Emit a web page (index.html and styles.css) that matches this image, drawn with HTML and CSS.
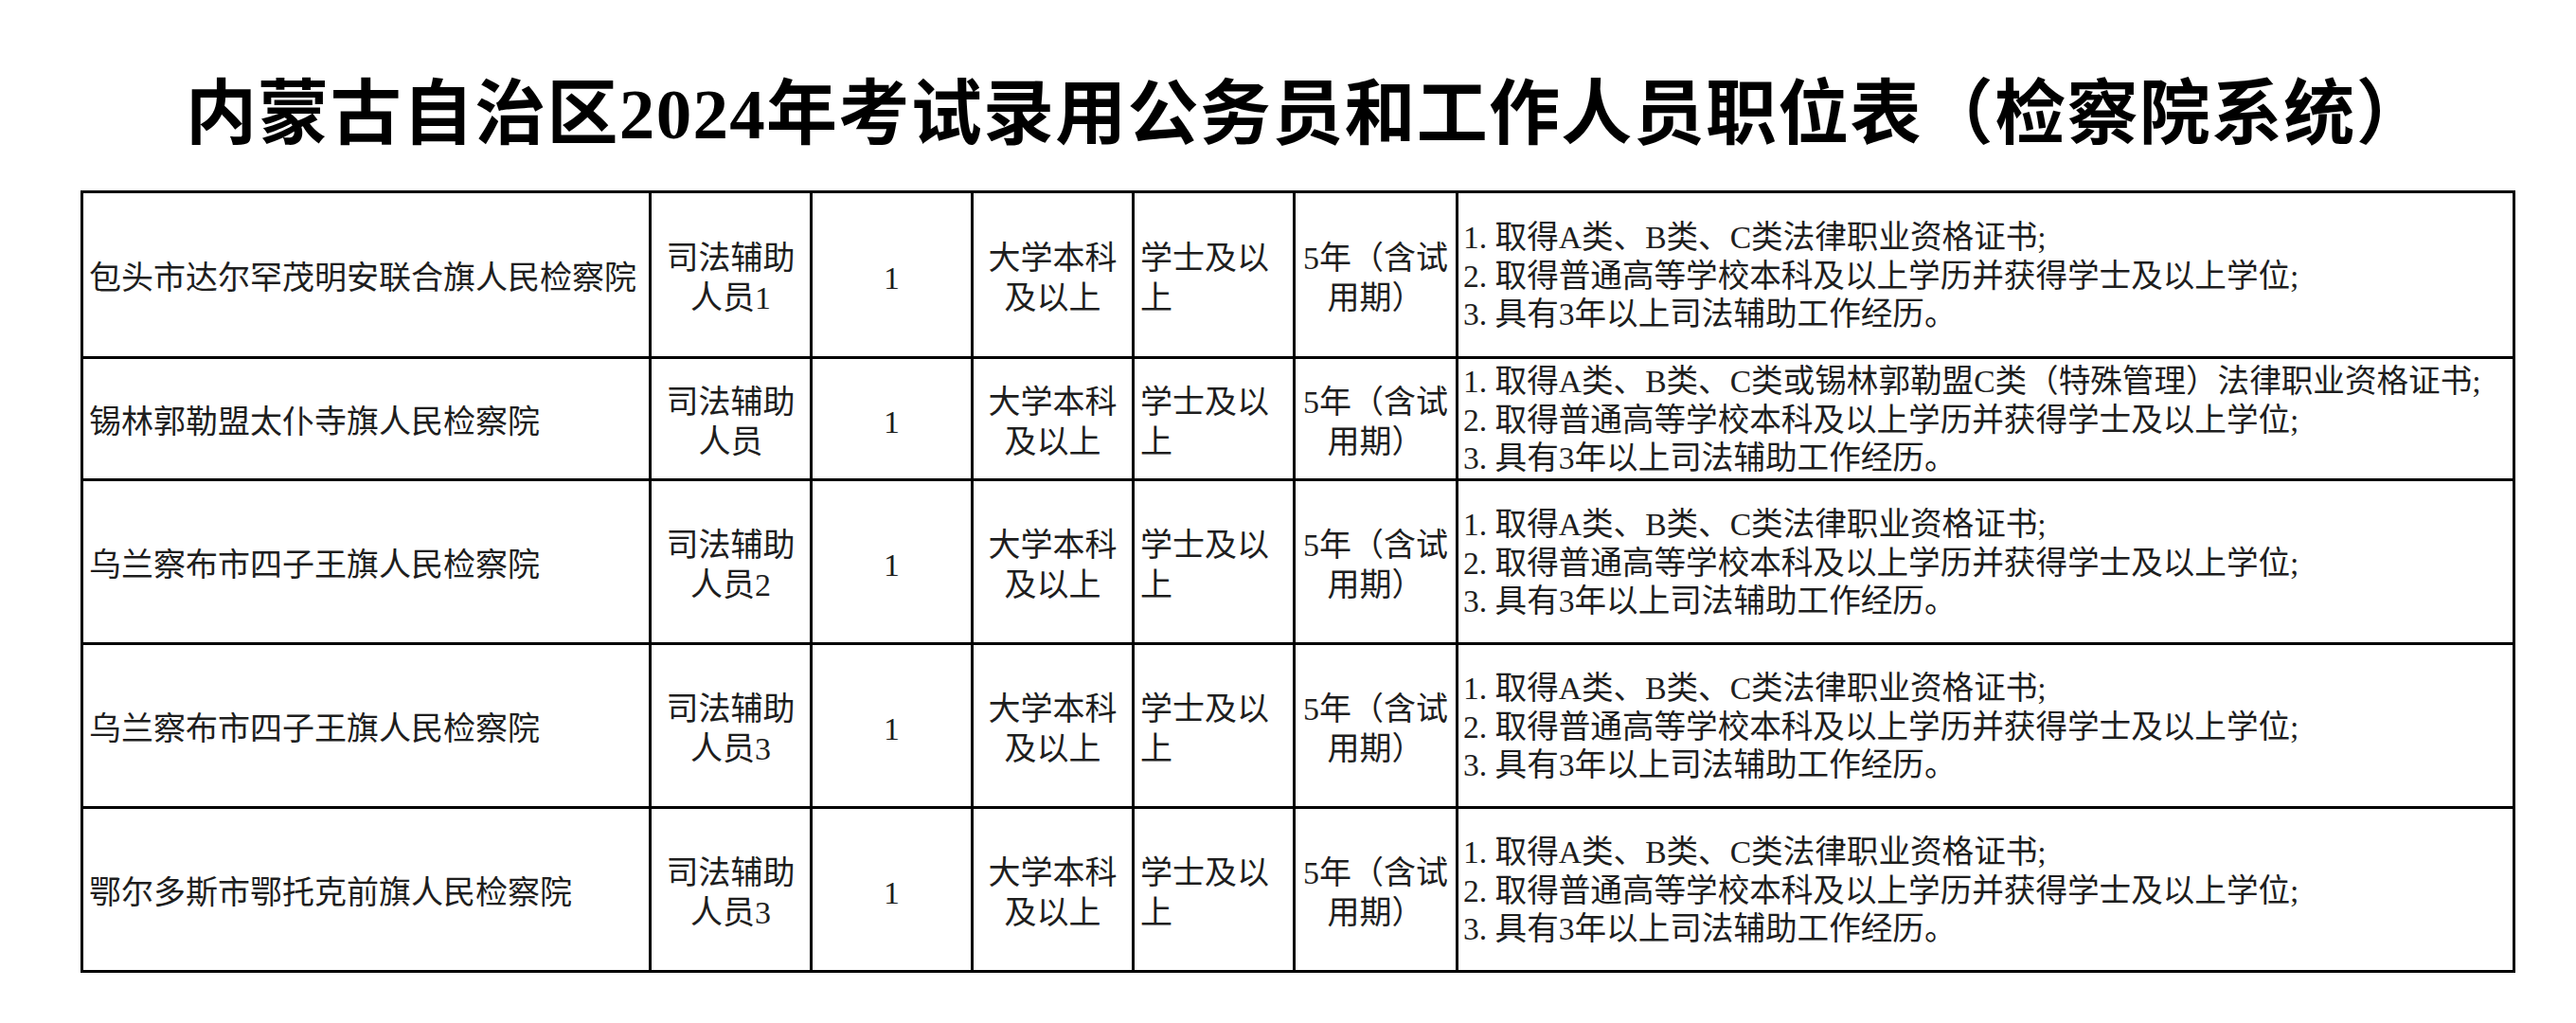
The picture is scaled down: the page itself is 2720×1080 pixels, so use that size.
FILE: index.html
```html
<!DOCTYPE html>
<html lang="zh-CN">
<head>
<meta charset="utf-8">
<title>内蒙古自治区2024年考试录用公务员和工作人员职位表（检察院系统）</title>
<link rel="stylesheet" href="styles.css">
</head>
<body>
<div class="page">
  <h1 class="title">内蒙古自治区2024年考试录用公务员和工作人员职位表（检察院系统）</h1>
  <table class="jobs">
    <colgroup>
      <col class="c-org"><col class="c-pos"><col class="c-num"><col class="c-edu"><col class="c-deg"><col class="c-term"><col class="c-req">
    </colgroup>
    <tbody>
      <tr class="r-first">
        <td class="org">包头市达尔罕茂明安联合旗人民检察院</td>
        <td class="ctr">司法辅助<br>人员1</td>
        <td class="ctr">1</td>
        <td class="ctr">大学本科<br>及以上</td>
        <td class="deg">学士及以<br>上</td>
        <td class="ctr">5年（含试<br>用期）</td>
        <td class="req">1.&nbsp;取得A类、B类、C类法律职业资格证书;<br>2.&nbsp;取得普通高等学校本科及以上学历并获得学士及以上学位;<br>3.&nbsp;具有3年以上司法辅助工作经历。</td>
      </tr>
      <tr class="r-short">
        <td class="org">锡林郭勒盟太仆寺旗人民检察院</td>
        <td class="ctr">司法辅助<br>人员</td>
        <td class="ctr">1</td>
        <td class="ctr">大学本科<br>及以上</td>
        <td class="deg">学士及以<br>上</td>
        <td class="ctr">5年（含试<br>用期）</td>
        <td class="req">1.&nbsp;取得A类、B类、C类或锡林郭勒盟C类（特殊管理）法律职业资格证书;<br>2.&nbsp;取得普通高等学校本科及以上学历并获得学士及以上学位;<br>3.&nbsp;具有3年以上司法辅助工作经历。</td>
      </tr>
      <tr class="r-tall">
        <td class="org">乌兰察布市四子王旗人民检察院</td>
        <td class="ctr">司法辅助<br>人员2</td>
        <td class="ctr">1</td>
        <td class="ctr">大学本科<br>及以上</td>
        <td class="deg">学士及以<br>上</td>
        <td class="ctr">5年（含试<br>用期）</td>
        <td class="req">1.&nbsp;取得A类、B类、C类法律职业资格证书;<br>2.&nbsp;取得普通高等学校本科及以上学历并获得学士及以上学位;<br>3.&nbsp;具有3年以上司法辅助工作经历。</td>
      </tr>
      <tr class="r-tall">
        <td class="org">乌兰察布市四子王旗人民检察院</td>
        <td class="ctr">司法辅助<br>人员3</td>
        <td class="ctr">1</td>
        <td class="ctr">大学本科<br>及以上</td>
        <td class="deg">学士及以<br>上</td>
        <td class="ctr">5年（含试<br>用期）</td>
        <td class="req">1.&nbsp;取得A类、B类、C类法律职业资格证书;<br>2.&nbsp;取得普通高等学校本科及以上学历并获得学士及以上学位;<br>3.&nbsp;具有3年以上司法辅助工作经历。</td>
      </tr>
      <tr class="r-tall">
        <td class="org">鄂尔多斯市鄂托克前旗人民检察院</td>
        <td class="ctr">司法辅助<br>人员3</td>
        <td class="ctr">1</td>
        <td class="ctr">大学本科<br>及以上</td>
        <td class="deg">学士及以<br>上</td>
        <td class="ctr">5年（含试<br>用期）</td>
        <td class="req">1.&nbsp;取得A类、B类、C类法律职业资格证书;<br>2.&nbsp;取得普通高等学校本科及以上学历并获得学士及以上学位;<br>3.&nbsp;具有3年以上司法辅助工作经历。</td>
      </tr>
    </tbody>
  </table>
</div>
</body>
</html>
```

FILE: styles.css
```css
html, body {
  margin: 0;
  padding: 0;
  background: #ffffff;
}

.page {
  width: 2568px;
  margin-left: 85px;
  padding-top: 76px;
}

.title {
  margin: 0;
  margin-left: -85px;
  width: 2680px;
  padding-left: 40px;
  text-align: center;
  font-family: "Liberation Serif", "Noto Sans CJK SC", serif;
  font-weight: 700;
  font-size: 75px;
  letter-spacing: 1.3px;
  line-height: 90px;
  color: #000;
  height: 90px;
  margin-bottom: 35px;
}

.jobs {
  width: 2568px;
  border-collapse: collapse;
  table-layout: fixed;
  font-family: "Liberation Serif", "Noto Sans CJK SC", serif;
  font-size: 34px;
  line-height: 42px;
  color: #1e1e1e;
  font-weight: 400;
}

.c-org { width: 600px; }
.c-pos { width: 170px; }
.c-num { width: 170px; }
.c-edu { width: 170px; }
.c-deg { width: 170px; }
.c-term { width: 172px; }
.c-req { width: 1116px; }

.jobs td {
  border: 3px solid #000;
  padding: 8px 0 0 0;
  vertical-align: middle;
  white-space: nowrap;
  overflow: hidden;
}

.r-first td { height: 164px; }
.r-tall td { height: 162px; }
.r-short td { height: 118px; }

.jobs td.org {
  text-align: left;
  padding-left: 6px;
}

.jobs td.ctr {
  text-align: center;
}

.jobs td.deg {
  text-align: left;
  padding-left: 6px;
}

.jobs td.req {
  text-align: left;
  padding-top: 4px;
  padding-left: 5px;
  font-size: 33.6px;
  line-height: 40.5px;
}
```
